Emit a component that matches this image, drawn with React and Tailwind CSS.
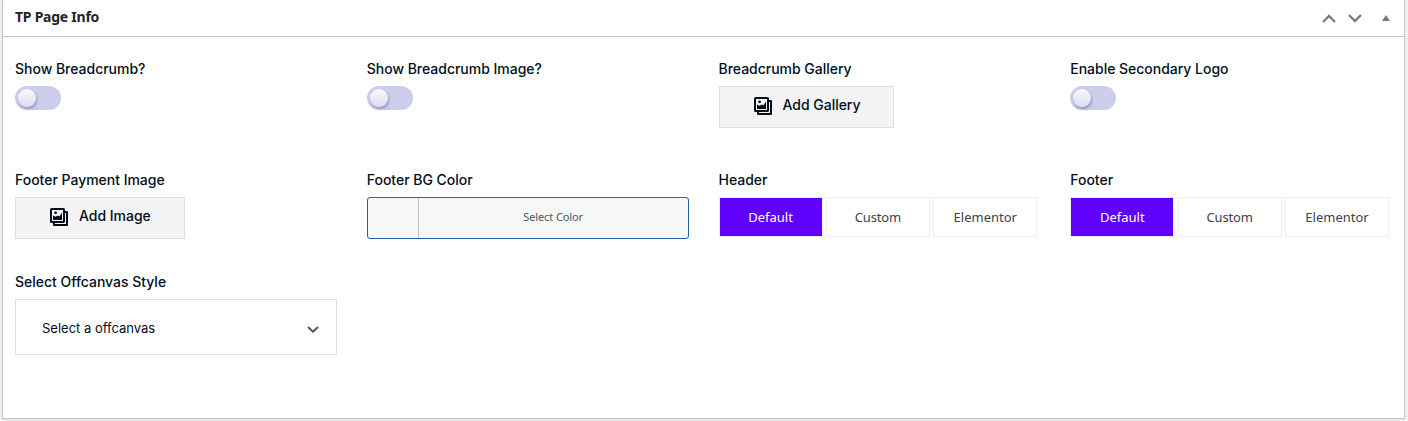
function Field({ label, children }) {
  return (
    <div className="flex min-w-0 flex-col items-start">
      <div className="mb-[7px] h-5 whitespace-nowrap font-['Inter',sans-serif] text-[14px] leading-5 font-medium tracking-[-0.02px] text-[#010f1c]">
        {label}
      </div>
      {children}
    </div>
  );
}

function Toggle() {
  return (
    <button className="flex h-6 w-[46px] items-center rounded-full bg-[#cdcded] px-[3px]">
      <span className="size-[18px] rounded-full bg-linear-to-b from-[#fafafd] to-[#dcdcee] shadow-[1px_2px_3px_rgba(60,60,120,0.4)]" />
    </button>
  );
}

function GalleryIcon() {
  return (
    <svg className="h-[18px] w-[18px] shrink-0" viewBox="0 0 18 18" fill="none">
      <path d="M15 4h2v13H4v-2" stroke="#010f1c" strokeWidth="2" strokeLinejoin="round" />
      <rect x="1" y="1" width="13" height="13" rx="0.6" fill="#f4f4f4" stroke="#010f1c" strokeWidth="2" />
      <path d="M3 12V7.4l2.4 1.4L8 7.6l1.4.8L12 4.4V12z" fill="#010f1c" />
      <circle cx="5.6" cy="4.8" r="1.4" fill="#010f1c" />
    </svg>
  );
}

function MediaButton({ children, className }) {
  return (
    <button className={`flex h-[42px] items-center border border-[#dfdfdf] bg-[#f4f4f4] pb-[5px] pl-[34px] font-['Inter',sans-serif] text-[14px] font-medium tracking-[-0.02px] whitespace-nowrap text-[#010f1c] ${className}`}>
      <span className="mt-[3px] mr-[11px]"><GalleryIcon /></span>
      {children}
    </button>
  );
}

function Segments() {
  return (
    <div className="flex gap-[3.4px] font-['Noto_Sans',sans-serif] text-[13px] text-[#3c434a]">
      {["Default", "Custom", "Elementor"].map((name, i) => (
        <button
          key={name}
          className={`h-10 w-[104px] border border-[#efeded] pt-px ${i === 0 ? "bg-[#5f00fb] text-white" : "bg-white"} ${i === 1 ? "tracking-[-0.15px]" : ""}`}
        >
          {name}
        </button>
      ))}
    </div>
  );
}

export default function App() {
  return (
    <div className="h-[421px] w-[1408px] overflow-hidden bg-[#f0f0f1] pl-[2px]">
      <section className="h-[419px] w-[1403px] border border-t-0 border-[#c3c4c7] bg-white shadow-[0_1px_1px_rgba(0,0,0,0.04)]">
        <header className="flex h-[37px] items-center justify-between border-b border-[#c3c4c7] pl-3">
          <h2 className="pb-[4px] font-['Noto_Sans',sans-serif] text-[14px] font-bold tracking-[-0.25px] text-[#1d2327]">
            TP Page Info
          </h2>
          <div className="flex items-center pt-px pr-[14px] text-[#787c82]">
            <svg className="mr-[12px] h-[9px] w-[14px]" viewBox="0 0 14 9" fill="none" stroke="currentColor" strokeWidth="2.3">
              <path d="M1 8 7 2l6 6" />
            </svg>
            <svg className="mr-[20px] h-[9px] w-[14px]" viewBox="0 0 14 9" fill="none" stroke="currentColor" strokeWidth="2.3">
              <path d="M1 1l6 6 6-6" />
            </svg>
            <svg className="mb-px h-[6px] w-[8px]" viewBox="0 0 8 6" fill="currentColor">
              <path d="M4 0l4 6H0z" />
            </svg>
          </div>
        </header>
        <div className="grid w-[1389px] grid-cols-4 grid-rows-[111px_102px_84px] gap-x-[30px] pt-[22px] pl-3">
          <Field label="Show Breadcrumb?"><Toggle /></Field>
          <Field label="Show Breadcrumb Image?"><Toggle /></Field>
          <Field label="Breadcrumb Gallery">
            <MediaButton className="w-[175px]">Add Gallery</MediaButton>
          </Field>
          <Field label="Enable Secondary Logo"><Toggle /></Field>
          <Field label="Footer Payment Image">
            <MediaButton className="w-[170px]">Add Image</MediaButton>
          </Field>
          <Field label="Footer BG Color">
            <button className="flex h-[42px] w-full overflow-hidden rounded-[3px] border border-[#2862a8] bg-[#f6f7f7]">
              <span className="h-full w-[50px]" />
              <span className="flex h-full flex-1 items-center justify-center border-l border-[#c3c4c7] pb-px font-['Noto_Sans',sans-serif] text-[11px] tracking-[-0.1px] text-[#50575e]">
                Select Color
              </span>
            </button>
          </Field>
          <Field label="Header"><Segments /></Field>
          <Field label="Footer"><Segments /></Field>
          <Field label="Select Offcanvas Style">
            <button className="flex h-14 w-full items-center justify-between border border-[#dfdfdf] bg-white pr-[17px] pl-[26px] font-['Inter',sans-serif] text-[13px] text-[#010f1c]">
              <span className="pt-[4px]">Select a offcanvas</span>
              <svg className="mt-[5px] h-[7px] w-[12px]" viewBox="0 0 12 7" fill="none" stroke="#555" strokeWidth="2">
                <path d="M1 1l5 4.7L11 1" />
              </svg>
            </button>
          </Field>
        </div>
      </section>
    </div>
  );
}
